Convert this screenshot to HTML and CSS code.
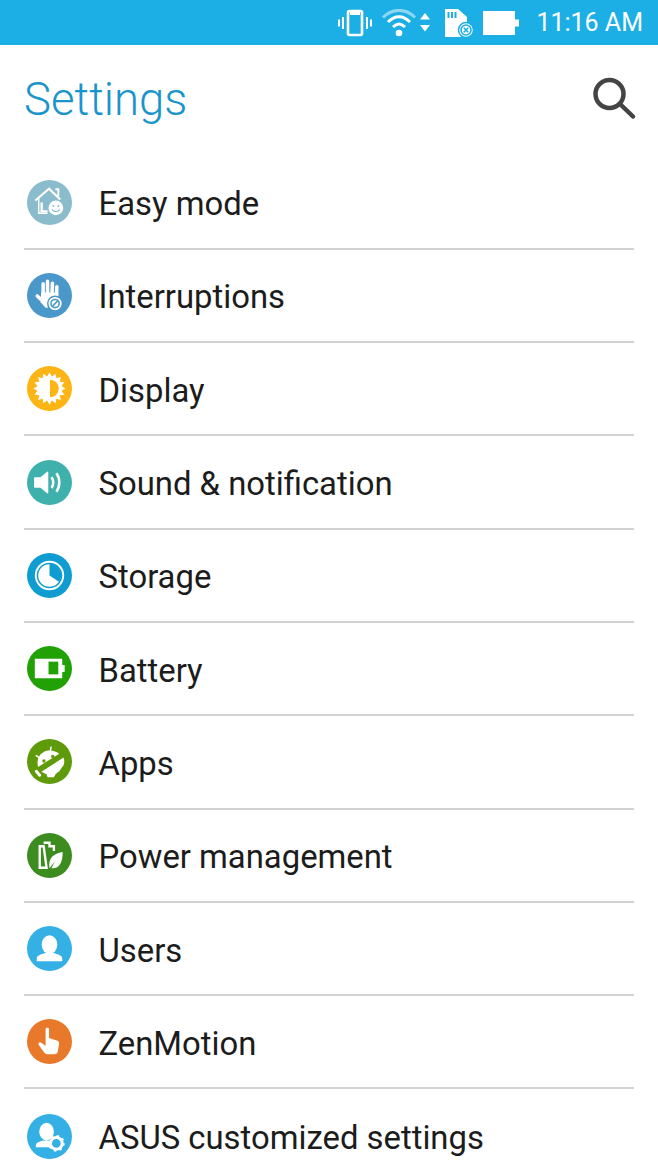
FILE: index.html
```html
<!DOCTYPE html>
<html lang="en">
<head>
	<meta charset="UTF-8">
	<title>Settings</title>
	<link rel="stylesheet" href="styles.css">
</head>
<body>
	<div class="statusbar">
		<svg class="st-vibrate" width="34" height="28" viewBox="0 0 34 28">
			<rect x="10" y="2" width="14" height="24" rx="1.5" fill="none" stroke="#fff" stroke-width="2.6"/>
			<rect x="12" y="3" width="10" height="3" fill="#fff"/>
			<path d="M5 8v12M1 10.500v7M29 8v12M33 10.500v7" stroke="#fff" stroke-width="2" fill="none"/>
		</svg>
		<svg class="st-wifi" width="48" height="28" viewBox="0 0 48 28">
			<path d="M1 8.500C10 -1 24 -1 33 8.500" stroke="#8ed6f2" stroke-width="3" fill="none"/>
			<path d="M6 13C13 6 21 6 28 13" stroke="#fff" stroke-width="3" fill="none"/>
			<path d="M11 18C15 14 19 14 23 18" stroke="#fff" stroke-width="3" fill="none"/>
			<circle cx="17" cy="24" r="3.300" fill="#fff"/>
			<path d="M38 10.500l5-6.500 5 6.500zM38 16h10l-5 6.500z" fill="#fff"/>
		</svg>
		<svg class="st-sd" width="30" height="28" viewBox="0 0 30 28">
			<path d="M0 0h13l9 8v20H0z" fill="#fff"/>
			<path d="M3.500 3v6M7 3v6M10.500 3v6" stroke="#1cafe6" stroke-width="2"/>
			<circle cx="21" cy="21" r="7.500" fill="#fff" stroke="#1cafe6" stroke-width="1.500"/>
			<circle cx="21" cy="21" r="5" fill="none" stroke="#1cafe6" stroke-width="1.600"/>
			<path d="M18.800 18.800l4.400 4.400M23.200 18.800l-4.400 4.400" stroke="#1cafe6" stroke-width="1.600"/>
		</svg>
		<svg class="st-batt" width="36" height="24" viewBox="0 0 36 24">
			<path d="M0 0h32v8.500h4v7h-4V24H0z" fill="#fff"/>
		</svg>
		<span class="clock">11:16 AM</span>
	</div>

	<div class="topbar">
		<h1 class="title">Settings</h1>
		<svg class="search" width="44" height="44" viewBox="0 0 44 44">
			<circle cx="16.500" cy="17" r="14" fill="none" stroke="#444" stroke-width="4.500"/>
			<path d="M27 27l13 12.500" stroke="#444" stroke-width="4.500" stroke-linecap="round"/>
		</svg>
	</div>

	<ul class="list">
		<li class="row">
			<span class="ic ic-easy">
				<svg viewBox="0 0 46 46">
					<path d="M8.500 21L22.500 9 34 20" fill="none" stroke="#fff" stroke-width="2.200"/>
					<path d="M29 9.500h3v7" fill="none" stroke="#fff" stroke-width="2"/>
					<path d="M12 19v15h9" fill="none" stroke="#fff" stroke-width="1.400"/>
					<path d="M15 23v9h6" fill="none" stroke="#fff" stroke-width="2.400"/>
					<circle cx="29.500" cy="28.500" r="7.500" fill="#fff"/>
					<circle cx="27" cy="26.500" r="1" fill="#8bbccb"/>
					<circle cx="32" cy="26.500" r="1" fill="#8bbccb"/>
					<path d="M25.500 30c2 3 6 3 8 0" fill="none" stroke="#8bbccb" stroke-width="1.200"/>
				</svg>
			</span>
			<span class="label">Easy mode</span>
		</li>
		<li class="row">
			<span class="ic ic-intr">
				<svg viewBox="0 0 46 46">
					<path d="M16.500 24V11M21 24V8.500M25.500 24l.5-13.500M30 26l.5-12M10.500 23.500L17 29.500" fill="none" stroke="#fff" stroke-width="3.600" stroke-linecap="round"/>
					<path d="M14.500 20H32v8l-5 7.500h-8L14 30z" fill="#fff"/>
					<circle cx="28.700" cy="31.200" r="7.500" fill="#fff" stroke="#4a98c9" stroke-width="1.500"/>
					<circle cx="28.700" cy="31.200" r="4.200" fill="none" stroke="#4a98c9" stroke-width="1.600"/>
					<path d="M25.700 34.200l6-6" stroke="#4a98c9" stroke-width="1.600"/>
				</svg>
			</span>
			<span class="label">Interruptions</span>
		</li>
		<li class="row">
			<span class="ic ic-disp">
				<svg viewBox="0 0 46 46">
					<polygon fill="#fff" points="23,6.500 25.400,10.700 29.300,7.800 30,12.600 34.700,11.300 33.400,16 38.200,16.700 35.300,20.600 39.500,23 35.300,25.400 38.200,29.300 33.400,30 34.700,34.700 30,33.400 29.300,38.200 25.400,35.300 23,39.500 20.600,35.300 16.700,38.200 16,33.400 11.300,34.700 12.600,30 7.800,29.300 10.700,25.400 6.500,23 10.700,20.600 7.800,16.700 12.600,16 11.300,11.300 16,12.600 16.700,7.800 20.600,10.700"/>
					<path d="M23.500 14a9 9 0 0 1 0 18z" fill="#fdb515"/>
				</svg>
			</span>
			<span class="label">Display</span>
		</li>
		<li class="row">
			<span class="ic ic-sound">
				<svg viewBox="0 0 46 46">
					<path d="M8 18.500h6l7-6v21l-7-6H8z" fill="#fff" stroke="#fff" stroke-width="1.500" stroke-linejoin="round"/>
					<path d="M25 17.500c2.500 3 2.500 8 0 11" fill="none" stroke="#fff" stroke-width="2.600"/>
					<path d="M30 13.500c4 5 4 14 0 19" fill="none" stroke="#fff" stroke-width="2.600"/>
				</svg>
			</span>
			<span class="label">Sound &amp; notification</span>
		</li>
		<li class="row">
			<span class="ic ic-stor">
				<svg viewBox="0 0 46 46">
					<circle cx="23" cy="23" r="15" fill="#fff"/>
					<circle cx="23" cy="23" r="12.300" fill="#fff" stroke="#0f9dd1" stroke-width="1.500"/>
					<path d="M23 10.700a12.300 12.300 0 0 1 10 19L23 23z" fill="#0f9dd1"/>
				</svg>
			</span>
			<span class="label">Storage</span>
		</li>
		<li class="row">
			<span class="ic ic-batt">
				<svg viewBox="0 0 46 46">
					<path d="M8 13h28v6.500h2.500v7H36V33H8z" fill="#fff"/>
					<rect x="22" y="16" width="10" height="13" fill="#22a105"/>
				</svg>
			</span>
			<span class="label">Battery</span>
		</li>
		<li class="row">
			<span class="ic ic-apps">
				<svg viewBox="0 0 46 46">
					<path d="M11.300 28.500C9 20 14 13 21.300 11.800 25.500 11.200 30 12.500 33 15.200z" fill="#fff"/>
					<path d="M14.700 33.500L37.300 19c1.500 4 .8 7.500-1.500 10L33 33l-3.500 2.500-2 3.500H21l-1-3z" fill="#fff"/>
					<path d="M9 16.800l5 3.200M24.700 7.800l-1 5" stroke="#fff" stroke-width="1.500"/>
					<path d="M9.500 33l3.500 4" stroke="#fff" stroke-width="3" stroke-linecap="round"/>
					<circle cx="17.300" cy="22.500" r="1.700" fill="#5f9a0a"/>
					<circle cx="26.300" cy="17.800" r="1.700" fill="#5f9a0a"/>
				</svg>
			</span>
			<span class="label">Apps</span>
		</li>
		<li class="row">
			<span class="ic ic-power">
				<svg viewBox="0 0 46 46">
					<path d="M17 10h6v3.500h4.500v5M20 35.500h-7v-22h4z" fill="none" stroke="#fff" stroke-width="2.400"/>
					<path d="M23 36c-1.500-9 3-15 13.500-16.500 0 10-3 17.500-11.500 16.500l3.500-7z" fill="#fff"/>
				</svg>
			</span>
			<span class="label">Power management</span>
		</li>
		<li class="row">
			<span class="ic ic-users">
				<svg viewBox="0 0 46 46">
					<ellipse cx="23" cy="19" rx="8" ry="9.500" fill="#fff"/>
					<path d="M10 36v-3c0-3 4-4 9-5.500h8c5 1.500 9 2.500 9 5.500v3z" fill="#fff"/>
				</svg>
			</span>
			<span class="label">Users</span>
		</li>
		<li class="row">
			<span class="ic ic-zen">
				<svg viewBox="0 0 46 46">
					<path d="M19 10.500c0-2 3.500-2 3.500 0v9l8 2.500c2 .6 2.500 2 2.200 4l-1.200 7c-.3 2-1.500 3-3.500 3H21c-2 0-3-1-4-2.500l-5-7c-1-2 1-3.500 3-2l4 3z" fill="#fff"/>
				</svg>
			</span>
			<span class="label">ZenMotion</span>
		</li>
		<li class="row">
			<span class="ic ic-asus">
				<svg viewBox="0 0 46 46">
					<ellipse cx="20" cy="18" rx="7.500" ry="9" fill="#fff"/>
					<path d="M9 34v-2c0-3 4-4 8-5h5l2 7z" fill="#fff"/>
					<circle cx="30" cy="30" r="6" fill="none" stroke="#fff" stroke-width="3"/>
					<circle cx="30" cy="30" r="7.500" fill="none" stroke="#fff" stroke-width="2" stroke-dasharray="2.500 3.400"/>
				</svg>
			</span>
			<span class="label">ASUS customized settings</span>
		</li>
	</ul>
</body>
</html>
```

FILE: styles.css
```css
html, body{
	margin: 0;
	height: 1170px;
	overflow: hidden;
	background-color: #fff;
	font-family: "Roboto", "Liberation Sans", sans-serif;
}
.statusbar{
	display: flex;
	align-items: center;
	justify-content: flex-end;
	height: 45px;
	padding-right: 15px;
	background-color: #1cafe6;
}
.statusbar svg{
	display: block;
}
.st-vibrate{
	margin-right: 10px;
}
.st-wifi{
	margin-right: 15px;
}
.st-sd{
	margin-right: 8px;
}
.st-batt{
	margin-right: 17px;
}
.clock{
	color: #fff;
	font-size: 25px;
}
.topbar{
	display: flex;
	align-items: center;
	justify-content: space-between;
	height: 111.5px;
	padding: 0 21px 2px 24px;
	box-sizing: border-box;
}
.title{
	margin: 0;
	font-size: 45.5px;
	font-weight: 300;
	color: #1a95cb;
}
.search{
	margin-bottom: 2px;
}
.list{
	margin: 0 24px;
	padding: 0;
	list-style: none;
}
.row{
	display: flex;
	align-items: center;
	gap: 26.5px;
	height: 93.3px;
	box-sizing: border-box;
	padding-left: 3px;
	border-bottom: 2px solid #d2d2d0;
}
.row:last-child{
	border-bottom: none;
}
.ic{
	display: block;
	flex: none;
	width: 45px;
	height: 45px;
	border-radius: 50%;
}
.ic svg{
	display: block;
	width: 45px;
	height: 45px;
}
.label{
	padding-top: 4px;
	font-size: 32.85px;
	color: #1c1c1c;
}
.ic-easy{
	background-color: #8bbccb;
}
.ic-intr{
	background-color: #4a98c9;
}
.ic-disp{
	background-color: #fdb515;
}
.ic-sound{
	background-color: #3fb1ad;
}
.ic-stor{
	background-color: #0f9dd1;
}
.ic-batt{
	background-color: #22a105;
}
.ic-apps{
	background-color: #5f9a0a;
}
.ic-power{
	background-color: #3c8c1f;
}
.ic-users{
	background-color: #35b0e5;
}
.ic-zen{
	background-color: #e8792b;
}
.ic-asus{
	background-color: #35b0e5;
}
```
